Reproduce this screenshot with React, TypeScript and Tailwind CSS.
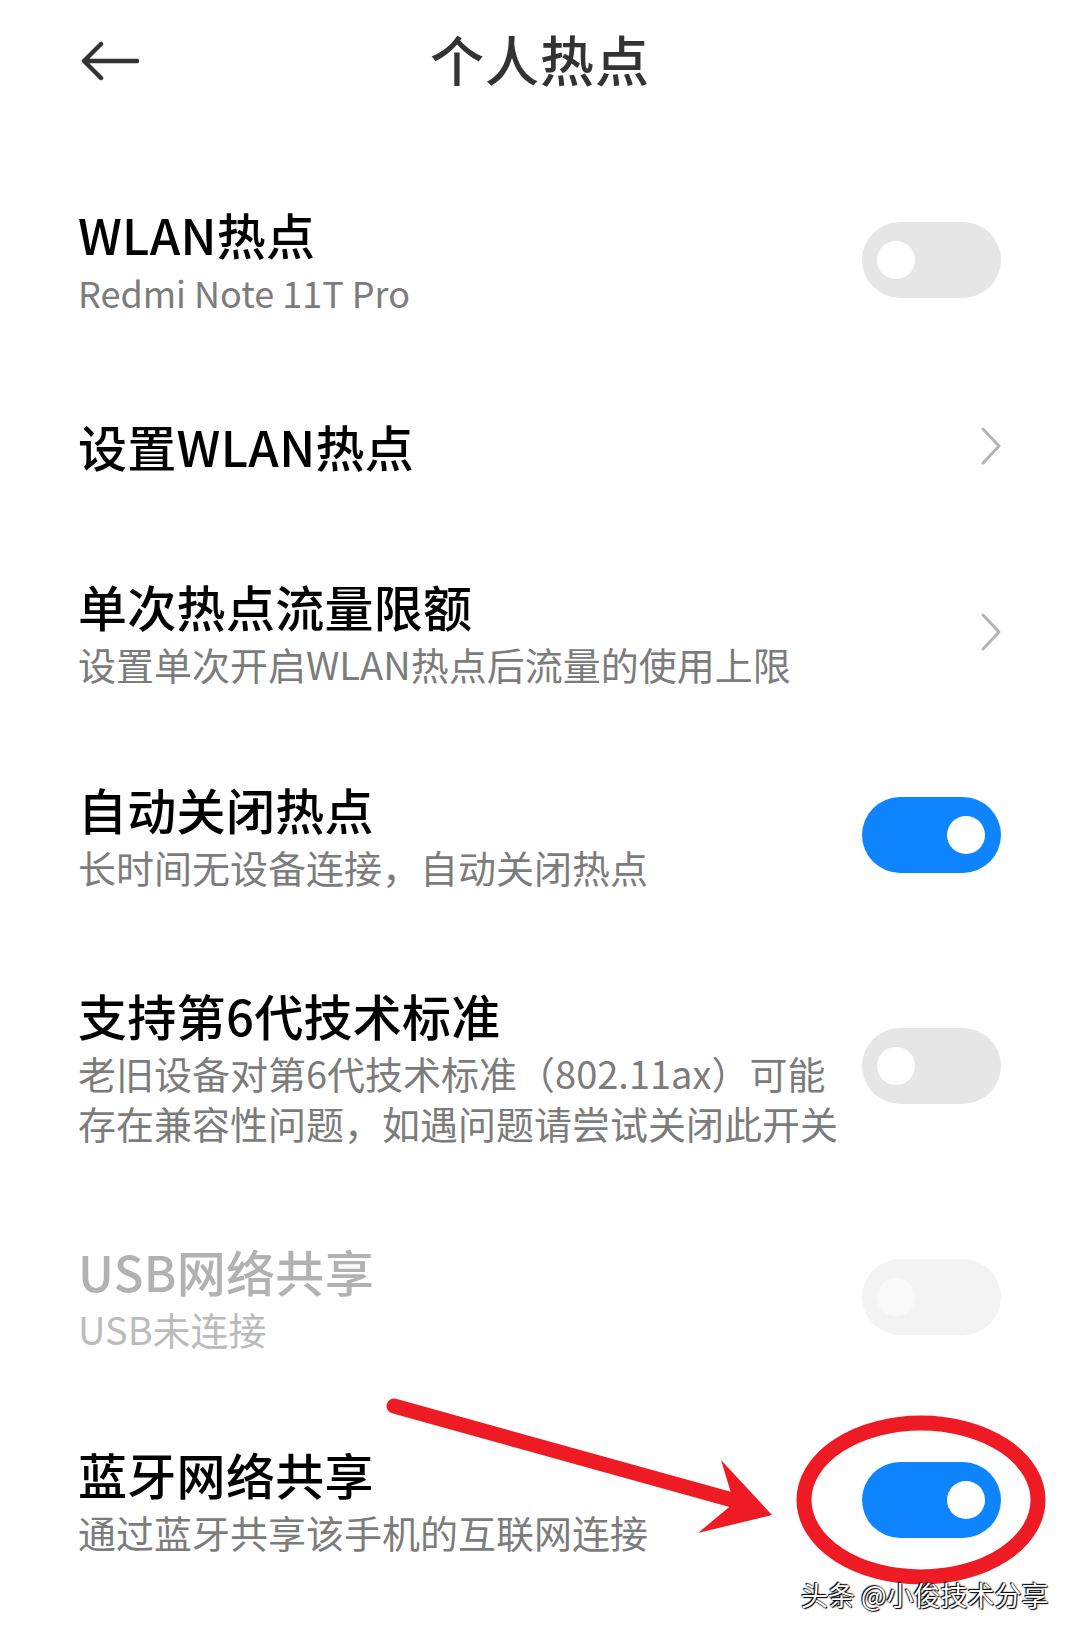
import type { ReactNode } from 'react';

type RightKind = 'on' | 'off' | 'disabled' | 'chevron';

interface SettingRow {
  title: string;
  sub?: ReactNode;
  subSize?: string;
  right: RightKind;
  height: string;
  dim?: boolean;
}

const rows: SettingRow[] = [
  { title: 'WLAN热点', sub: 'Redmi Note 11T Pro', subSize: 'text-[36px]', right: 'off', height: 'h-[203px]' },
  { title: '设置WLAN热点', right: 'chevron', height: 'h-[169px]' },
  { title: '单次热点流量限额', sub: '设置单次开启WLAN热点后流量的使用上限', right: 'chevron', height: 'h-[203px]' },
  { title: '自动关闭热点', sub: '长时间无设备连接，自动关闭热点', right: 'on', height: 'h-[203px]' },
  {
    title: '支持第6代技术标准',
    sub: (
      <>
        老旧设备对第6代技术标准（802.11ax）可能
        <br />
        存在兼容性问题，如遇问题请尝试关闭此开关
      </>
    ),
    right: 'off',
    height: 'h-[259px]',
  },
  { title: 'USB网络共享', sub: 'USB未连接', right: 'disabled', height: 'h-[203px]', dim: true },
  { title: '蓝牙网络共享', sub: '通过蓝牙共享该手机的互联网连接', right: 'on', height: 'h-[203px]' },
];

function Toggle({ kind }: { kind: 'on' | 'off' | 'disabled' }) {
  if (kind === 'on') {
    return (
      <div className="w-[139px] h-[76px] rounded-full bg-[#0e84fe] flex items-center justify-end pr-[16px] shrink-0">
        <div className="w-[38px] h-[38px] rounded-full bg-white" />
      </div>
    );
  }
  if (kind === 'disabled') {
    return (
      <div className="w-[139px] h-[76px] rounded-full bg-[#f3f3f3] flex items-center pl-[15px] shrink-0">
        <div className="w-[38px] h-[38px] rounded-full bg-[#f9f9f9]" />
      </div>
    );
  }
  return (
    <div className="w-[139px] h-[76px] rounded-full bg-[#e6e6e6] flex items-center pl-[15px] shrink-0">
      <div className="w-[38px] h-[38px] rounded-full bg-white" />
    </div>
  );
}

function Chevron() {
  return (
    <svg width="22" height="40" viewBox="0 0 22 40" fill="none" className="shrink-0 mr-[-1px]">
      <polyline points="3,3 19,20 3,37" stroke="#b4b4b4" strokeWidth="3" strokeLinecap="round" strokeLinejoin="round" />
    </svg>
  );
}

export default function App() {
  return (
    <div className="relative w-[1080px] min-h-[1634px] bg-white overflow-hidden font-['Noto_Sans_CJK_SC','Noto_Sans',sans-serif]">
      {/* Header */}
      <div className="h-[118px] grid grid-cols-[1fr_auto_1fr] items-center">
        <div className="pl-[81px] pt-[3px]">
          <svg width="58" height="40" viewBox="0 0 58 40" fill="none">
            <path d="M56 20H4M20 3L3 20L20 37" stroke="#333333" strokeWidth="4.5" strokeLinecap="round" strokeLinejoin="round" />
          </svg>
        </div>
        <h1 className="text-[54px] leading-[62px] font-medium text-[#333333] tracking-[1px]">个人热点</h1>
        <div />
      </div>

      {/* Settings list */}
      <div className="mt-[40px]">
        {rows.map((row) => (
          <div key={row.title} className={`${row.height} flex items-center justify-between pl-[78px] pr-[79px]`}>
            <div className="flex flex-col">
              <div
                className={`text-[49px] leading-[62px] font-medium tracking-[0.3px] ${row.dim ? 'text-[#b2b2b2]' : 'text-black'}`}
              >
                {row.title}
              </div>
              {row.sub && (
                <div
                  className={`${row.subSize ?? 'text-[38px]'} leading-[50px] mt-[2px] ${row.dim ? 'text-[#bbbbbb]' : 'text-[#7c7c7c]'}`}
                >
                  {row.sub}
                </div>
              )}
            </div>
            {row.right === 'chevron' ? <Chevron /> : <Toggle kind={row.right} />}
          </div>
        ))}
      </div>

      {/* Red annotation drawn over the screenshot */}
      <svg
        className="absolute left-0 top-0 pointer-events-none"
        width="1080"
        height="1634"
        viewBox="0 0 1080 1634"
        fill="none"
      >
        <line x1="394" y1="1406" x2="736" y2="1501" stroke="#ee1b24" strokeWidth="15" strokeLinecap="round" />
        <polygon points="721,1460 772,1515 698,1533 734,1503" fill="#ee1b24" />
        <ellipse cx="921" cy="1500" rx="117" ry="77" stroke="#ee1b24" strokeWidth="15" />
      </svg>

      {/* Watermark */}
      <div className="absolute left-[801px] top-[1577px] text-[27px] leading-[36px] text-white whitespace-nowrap [text-shadow:0_0_2px_#000,1px_1px_1px_#000,-1px_-1px_1px_#000]">
        头条 @小俊技术分享
      </div>
    </div>
  );
}
